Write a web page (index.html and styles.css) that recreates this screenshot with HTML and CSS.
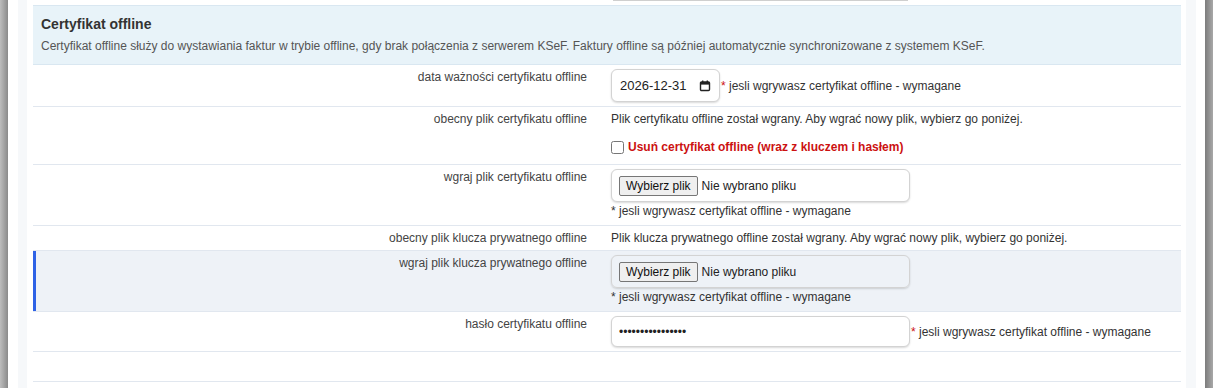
FILE: index.html
```html
<!DOCTYPE html>
<html lang="pl">
<head>
    <meta charset="utf-8">
    <title>Certyfikat offline</title>
    <link rel="stylesheet" href="styles.css">
</head>
<body>
    <div class="window">
        <div class="edge edge-left"></div>
        <div class="page">
            <div class="panel">
                <div class="sheet">
                    <div class="prev"><div class="prev-input"></div></div>

                    <div class="section-head">
                        <h3 class="section-title">Certyfikat offline</h3>
                        <p class="section-desc">Certyfikat offline służy do wystawiania faktur w trybie offline, gdy brak połączenia z serwerem KSeF. Faktury offline są później automatycznie synchronizowane z systemem KSeF.</p>
                    </div>

                    <div class="form-row">
                        <div class="form-label">data ważności certyfikatu offline</div>
                        <div class="form-value inline">
                            <div class="date-field">
                                <span>2026-12-31</span>
                                <svg class="cal-icon" width="12" height="12" viewBox="0 0 12 12">
                                    <rect x="1.5" y="2" width="9" height="8.5" rx="1" fill="none" stroke="#222" stroke-width="1.4"/>
                                    <rect x="1.5" y="2" width="9" height="2.6" fill="#222"/>
                                    <rect x="3" y="0.5" width="1.4" height="2" fill="#222"/>
                                    <rect x="7.6" y="0.5" width="1.4" height="2" fill="#222"/>
                                </svg>
                            </div>
                            <span class="hint"><span class="req">*</span> jesli wgrywasz certyfikat offline - wymagane</span>
                        </div>
                    </div>

                    <div class="form-row">
                        <div class="form-label">obecny plik certyfikatu offline</div>
                        <div class="form-value">
                            <div class="line">Plik certyfikatu offline został wgrany. Aby wgrać nowy plik, wybierz go poniżej.</div>
                            <label class="check-line">
                                <input type="checkbox" class="check">
                                <span class="danger">Usuń certyfikat offline (wraz z kluczem i hasłem)</span>
                            </label>
                        </div>
                    </div>

                    <div class="form-row">
                        <div class="form-label">wgraj plik certyfikatu offline</div>
                        <div class="form-value">
                            <div class="file-field">
                                <button type="button" class="file-btn">Wybierz plik</button>
                                <span class="file-name">Nie wybrano pliku</span>
                            </div>
                            <div class="hint-below">* jesli wgrywasz certyfikat offline - wymagane</div>
                        </div>
                    </div>

                    <div class="form-row">
                        <div class="form-label">obecny plik klucza prywatnego offline</div>
                        <div class="form-value">
                            <div class="line">Plik klucza prywatnego offline został wgrany. Aby wgrać nowy plik, wybierz go poniżej.</div>
                        </div>
                    </div>

                    <div class="form-row form-row-active">
                        <div class="form-label">wgraj plik klucza prywatnego offline</div>
                        <div class="form-value">
                            <div class="file-field file-field-clear">
                                <button type="button" class="file-btn">Wybierz plik</button>
                                <span class="file-name">Nie wybrano pliku</span>
                            </div>
                            <div class="hint-below">* jesli wgrywasz certyfikat offline - wymagane</div>
                        </div>
                    </div>

                    <div class="form-row">
                        <div class="form-label">hasło certyfikatu offline</div>
                        <div class="form-value inline">
                            <input type="password" class="text-field" value="0123456789abcdef">
                            <span class="hint"><span class="req">*</span> jesli wgrywasz certyfikat offline - wymagane</span>
                        </div>
                    </div>

                    <div class="form-row form-row-empty"></div>
                </div>
            </div>
        </div>
        <div class="edge edge-right"></div>
    </div>
</body>
</html>
```

FILE: styles.css
```css
html, body {
    margin: 0;
    padding: 0;
    height: 100%;
    background: #ffffff;
    font-family: "Liberation Sans", Arial, sans-serif;
    font-size: 12px;
    color: #333;
}
.window {
    display: flex;
    height: 100vh;
    overflow: hidden;
}
.edge {
    width: 8px;
    flex-shrink: 0;
}
.edge-left {
    background: linear-gradient(to right, #bdbdbd, #8a8a8a);
}
.edge-right {
    background: linear-gradient(to right, #7c7c7c, #a8a8a8);
}
.page {
    flex: 1;
    background: #ffffff;
    padding: 0 9px 0 10px;
}
.panel {
    height: 100%;
    background: #f6f8fa;
    padding: 0 10px 0 9px;
}
.sheet {
    height: 100%;
    background: #ffffff;
    padding: 0 5px 0 6px;
}

/* tail of the field above the section */
.prev {
    height: 5px;
}
.prev-input {
    margin-left: 580px;
    width: 295px;
    height: 1px;
    background: #cfcfcf;
}

.section-head {
    background: #e8f3f9;
    border-top: 1px solid #d9e7f1;
    border-bottom: 1px solid #d9e7f1;
    padding: 9px 8px 10px 8px;
}
.section-title {
    margin: 0 0 5px 0;
    font-size: 14px;
    line-height: 18px;
    font-weight: bold;
    color: #333;
}
.section-desc {
    margin: 0;
    font-size: 12px;
    line-height: 16px;
    color: #555;
}

.form-row {
    display: grid;
    grid-template-columns: 566px 1fr;
    border-bottom: 1px solid #e1e7ef;
}
.form-row-active {
    background: #eef2f7;
    box-shadow: inset 3px 0 0 #2e62e6;
}
.form-row-empty {
    height: 29px;
}
.form-label {
    padding: 4px 12px;
    text-align: right;
    line-height: 16px;
    color: #444;
}
.form-value {
    padding: 4px 12px;
    line-height: 16px;
    color: #333;
}
.form-value.inline {
    display: flex;
    align-items: center;
}
.line {
    line-height: 16px;
}
.check-line {
    display: flex;
    align-items: center;
    margin: 11px 0 4px 0;
    height: 18px;
}
.check {
    width: 13px;
    height: 13px;
    margin: 0 4px 0 0;
}
.danger {
    color: #cc1111;
    font-weight: bold;
}

.date-field {
    box-sizing: border-box;
    width: 109px;
    height: 33px;
    display: flex;
    align-items: center;
    justify-content: space-between;
    padding: 0 8px 0 8px;
    background: #fff;
    border: 1px solid #d3d3d3;
    border-radius: 6px;
    box-shadow: 0 1px 2px rgba(0, 0, 0, 0.15);
    font-size: 13px;
    color: #222;
}
.cal-icon {
    display: block;
}
.hint {
    margin-left: 1px;
}
.req {
    color: #cc1111;
}

.file-field {
    box-sizing: border-box;
    width: 299px;
    height: 33px;
    display: flex;
    align-items: center;
    padding: 0 7px;
    background: #fff;
    border: 1px solid #d3d3d3;
    border-radius: 6px;
    box-shadow: 0 1px 2px rgba(0, 0, 0, 0.15);
}
.file-field-clear {
    background: transparent;
}
.file-btn {
    height: 20px;
    padding: 0 6px;
    margin: 0 4px 0 0;
    font-family: "Liberation Sans", Arial, sans-serif;
    font-size: 12px;
    color: #111;
    background: #efefef;
    border: 1px solid #767676;
    border-radius: 2px;
}
.file-name {
    font-size: 12px;
    color: #222;
}
.hint-below {
    margin: 1px 0 2px 0;
    line-height: 16px;
}

.text-field {
    box-sizing: border-box;
    width: 299px;
    height: 31px;
    padding: 0 7px;
    margin: 0;
    font-family: "Liberation Sans", Arial, sans-serif;
    font-size: 12px;
    color: #222;
    background: #fff;
    border: 1px solid #d3d3d3;
    border-radius: 6px;
    box-shadow: 0 1px 2px rgba(0, 0, 0, 0.15);
}
```
